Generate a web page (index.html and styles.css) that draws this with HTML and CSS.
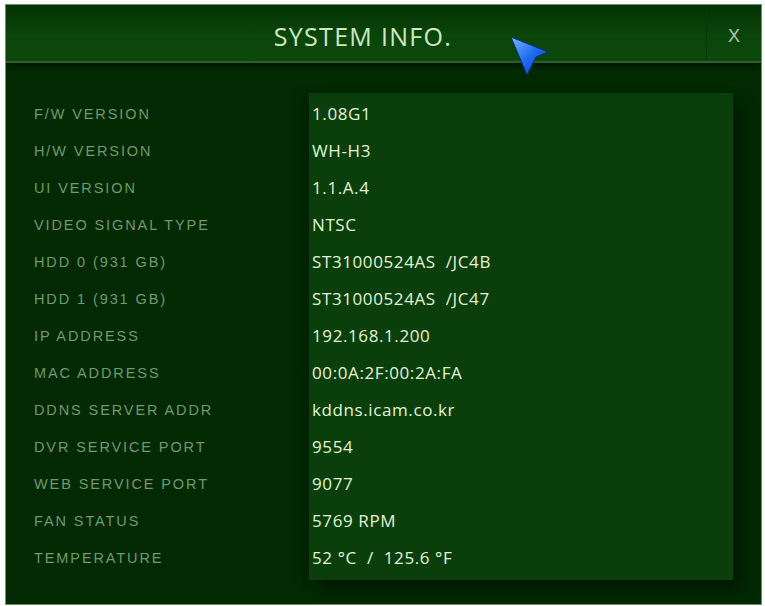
FILE: index.html
```html
<!DOCTYPE html>
<html lang="en">
<head>
<meta charset="utf-8">
<title>System Info</title>
<link rel="stylesheet" href="styles.css">
</head>
<body>
<div class="window">
  <div class="titlebar">
    <div class="title">SYSTEM INFO.</div>
    <div class="close">X</div>
  </div>
  <div class="content">
    <ul class="labels">
      <li>F/W VERSION</li>
      <li>H/W VERSION</li>
      <li>UI VERSION</li>
      <li>VIDEO SIGNAL TYPE</li>
      <li>HDD 0 (931 GB)</li>
      <li>HDD 1 (931 GB)</li>
      <li>IP ADDRESS</li>
      <li>MAC ADDRESS</li>
      <li>DDNS SERVER ADDR</li>
      <li>DVR SERVICE PORT</li>
      <li>WEB SERVICE PORT</li>
      <li>FAN STATUS</li>
      <li>TEMPERATURE</li>
    </ul>
    <ul class="values">
      <li>1.08G1</li>
      <li>WH-H3</li>
      <li>1.1.A.4</li>
      <li>NTSC</li>
      <li>ST31000524AS &nbsp;/JC4B</li>
      <li>ST31000524AS &nbsp;/JC47</li>
      <li>192.168.1.200</li>
      <li>00:0A:2F:00:2A:FA</li>
      <li>kddns.icam.co.kr</li>
      <li>9554</li>
      <li>9077</li>
      <li>5769 RPM</li>
      <li>52 °C &nbsp;/ &nbsp;125.6 °F</li>
    </ul>
  </div>
  <svg class="cursor" width="44" height="44" viewBox="0 0 44 44">
    <defs>
      <linearGradient id="cur" x1="0" y1="0" x2="1" y2="1">
        <stop offset="0" stop-color="#7ab8ff"/>
        <stop offset="0.5" stop-color="#1e6cf0"/>
        <stop offset="1" stop-color="#0a3cc0"/>
      </linearGradient>
    </defs>
    <path d="M2 2 L39 17 L27 22 L18 40 Z" fill="url(#cur)" stroke="#0b2a8a" stroke-width="1" stroke-linejoin="round"/>
  </svg>
</div>
</body>
</html>
```
FILE: styles.css
```css
html, body {
  margin: 0;
  padding: 0;
  background: #ffffff;
}

.window {
  position: relative;
  box-sizing: border-box;
  width: 757px;
  height: 601px;
  margin: 4px 0 0 5px;
  border: 1px solid #6f8f6f;
  background: #032903;
  display: flex;
  flex-direction: column;
  overflow: hidden;
}

.titlebar {
  height: 56px;
  display: flex;
  background: linear-gradient(#033303 0%, #0a450a 55%, #0b480b 100%);
  border-bottom: 2px solid #2f5f2f;
  box-shadow: 0 3px 4px rgba(0, 0, 0, 0.45);
}

.title {
  flex: 1;
  display: flex;
  align-items: center;
  justify-content: center;
  padding: 6px 0 0 14px;
  font-family: "Open Sans", "Liberation Sans", sans-serif;
  font-size: 25px;
  letter-spacing: 1.3px;
  color: #cfe8bf;
}

.close {
  width: 54px;
  padding-top: 6px;
  border-left: 1px solid #083808;
  display: flex;
  align-items: center;
  justify-content: center;
  font-family: "Liberation Sans", sans-serif;
  font-size: 18px;
  color: #b2c4b2;
}

.content {
  flex: 1;
  display: flex;
  padding: 30px 28px 24px 28px;
}

.labels,
.values {
  list-style: none;
  margin: 0;
  padding: 2px 0 0 0;
  display: flex;
  flex-direction: column;
}

.labels li,
.values li {
  height: 37px;
  display: flex;
  align-items: center;
}

.labels {
  width: 275px;
  font-family: "Liberation Sans", sans-serif;
  font-size: 14.5px;
  letter-spacing: 1.9px;
  color: #6f9a6b;
}

.values {
  flex: 1;
  padding-left: 3px;
  background: #0a3e0a;
  box-shadow: 10px 10px 14px rgba(0, 0, 0, 0.35), -6px 0 10px rgba(0, 0, 0, 0.2);
  font-family: "Open Sans", "Liberation Sans", sans-serif;
  font-size: 17px;
  letter-spacing: 0.6px;
  color: #e2f5d4;
}

.cursor {
  position: absolute;
  left: 503px;
  top: 30px;
}
```
